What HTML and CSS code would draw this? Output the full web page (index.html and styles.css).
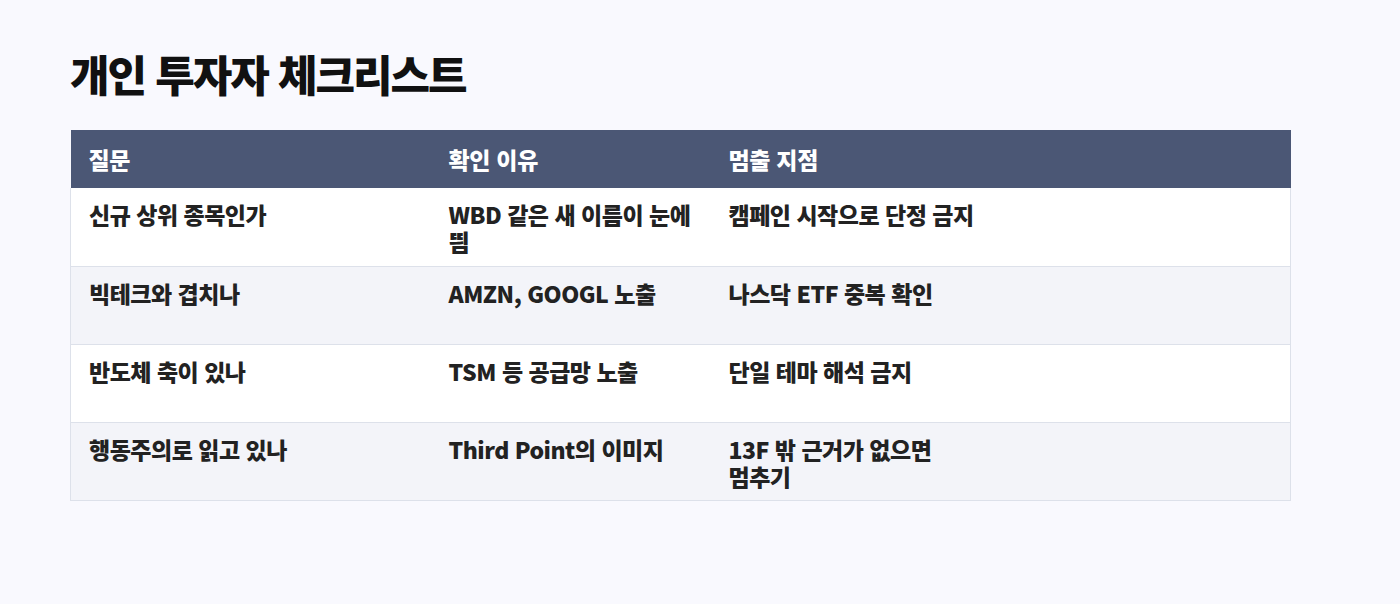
FILE: index.html
```html
<!DOCTYPE html>
<html lang="ko">
<head>
<meta charset="utf-8">
<title>개인 투자자 체크리스트</title>
<link rel="stylesheet" href="styles.css">
</head>
<body>
<main class="page">
  <h1 class="title">개인 투자자 체크리스트</h1>
  <table class="checklist">
    <colgroup>
      <col class="c1"><col class="c2"><col class="c3">
    </colgroup>
    <thead>
      <tr><th>질문</th><th>확인 이유</th><th>멈출 지점</th></tr>
    </thead>
    <tbody>
      <tr><td>신규 상위 종목인가</td><td>WBD 같은 새 이름이 눈에 띔</td><td>캠페인 시작으로 단정 금지</td></tr>
      <tr><td>빅테크와 겹치나</td><td>AMZN, GOOGL 노출</td><td>나스닥 ETF 중복 확인</td></tr>
      <tr><td>반도체 축이 있나</td><td>TSM 등 공급망 노출</td><td>단일 테마 해석 금지</td></tr>
      <tr><td>행동주의로 읽고 있나</td><td>Third Point의 이미지</td><td>13F 밖 근거가 없으면<br>멈추기</td></tr>
    </tbody>
  </table>
</main>
</body>
</html>
```
FILE: styles.css
```css
html, body {
  margin: 0;
  padding: 0;
  background: #f9f9fe;
}
body {
  font-family: "Noto Sans CJK KR", "Noto Sans", sans-serif;
  color: #1c1c1e;
}
.page {
  padding: 46px 70px 0 70px;
}
.title {
  margin: 0 0 30px 0;
  font-size: 43px;
  line-height: 54px;
  font-weight: 900;
  letter-spacing: -2px;
  color: #111;
}
.checklist {
  width: 1221px;
  border-collapse: collapse;
  table-layout: fixed;
}
.c1 { width: 360px; }
.c2 { width: 280px; }
.c3 { width: auto; }
.checklist th {
  background: #4b5775;
  color: #fff;
  text-align: left;
  font-size: 23px;
  font-weight: 900;
  letter-spacing: -0.3px;
  height: 58px;
  padding: 0 18px;
  vertical-align: middle;
  box-sizing: border-box;
}
.checklist td {
  height: 78px;
  box-sizing: border-box;
  padding: 13px 18px 10px 18px;
  vertical-align: top;
  font-size: 23px;
  line-height: 27px;
  font-weight: 900;
  letter-spacing: -0.5px;
  color: #222;
  border-bottom: 1px solid #dde1ea;
}
.checklist tbody tr { border-left: 1px solid #dde1ea; border-right: 1px solid #dde1ea; }
.checklist tbody tr:nth-child(odd) { background: #ffffff; }
.checklist tbody tr:nth-child(even) { background: #f3f4f9; }
```
